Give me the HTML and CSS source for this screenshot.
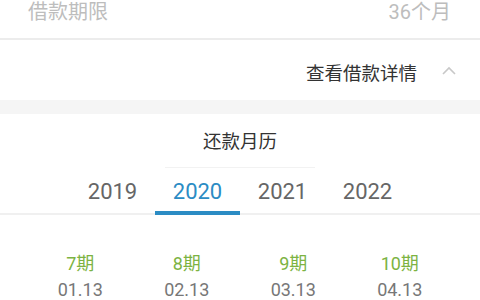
FILE: index.html
```html
<!DOCTYPE html>
<html lang="zh-CN">
<head>
    <meta charset="UTF-8">
    <meta name="viewport" content="width=device-width, initial-scale=1.0">
    <title>还款月历</title>
    <link rel="stylesheet" href="styles.css">
</head>
<body>
    <div class="info-row">
        <span>借款期限</span>
        <span>36个月</span>
    </div>
    <div class="detail-row">
        <span class="detail-text">查看借款详情</span>
        <svg class="chevron" width="16" height="10" viewBox="0 0 16 10">
            <path d="M2 8 L8 2 L14 8" fill="none" stroke="#c8c8c8" stroke-width="1.6"/>
        </svg>
    </div>
    <div class="gap"></div>
    <div class="calendar">
        <div class="calendar-title">
            <span>还款月历</span>
        </div>
        <div class="year-tabs">
            <div class="tab">2019</div>
            <div class="tab active">2020</div>
            <div class="tab">2021</div>
            <div class="tab">2022</div>
        </div>
        <div class="periods">
            <div class="period">
                <div class="period-num">7期</div>
                <div class="period-date">01.13</div>
            </div>
            <div class="period">
                <div class="period-num">8期</div>
                <div class="period-date">02.13</div>
            </div>
            <div class="period">
                <div class="period-num">9期</div>
                <div class="period-date">03.13</div>
            </div>
            <div class="period">
                <div class="period-num">10期</div>
                <div class="period-date">04.13</div>
            </div>
        </div>
    </div>
</body>
</html>
```

FILE: styles.css
```css
* {
    box-sizing: border-box;
    margin: 0;
    padding: 0;
}

body {
    width: 480px;
    height: 300px;
    overflow: hidden;
    background-color: #fff;
    font-family: Roboto, "Noto Sans CJK SC", sans-serif;
}

.info-row {
    height: 40px;
    padding: 0 29px 0 28px;
    display: flex;
    justify-content: space-between;
    align-items: flex-start;
    font-size: 20px;
    line-height: 24px;
    color: #bdbdbd;
    border-bottom: 2px solid #ececec;
}

.detail-row {
    height: 60px;
    padding: 4px 23px 0 0;
    display: flex;
    justify-content: flex-end;
    align-items: center;
    font-size: 18.5px;
    color: #333;
}

.chevron {
    margin-left: 24px;
    margin-top: -2px;
}

.gap {
    height: 14px;
    background-color: #f5f5f5;
}

.calendar-title {
    height: 54px;
    display: flex;
    justify-content: center;
}

.calendar-title span {
    width: 150px;
    padding-top: 14px;
    text-align: center;
    font-size: 18.5px;
    line-height: 28px;
    color: #333;
    border-bottom: 1px solid #f2f2f2;
}

.year-tabs {
    height: 47px;
    display: flex;
    justify-content: center;
    border-bottom: 2px solid #f0f0f0;
}

.tab {
    width: 85px;
    padding-top: 10px;
    text-align: center;
    font-size: 22px;
    line-height: 28px;
    color: #666;
}

.tab.active {
    color: #2b8cc4;
    border-bottom: 4px solid #2b8cc4;
    margin-bottom: -2px;
}

.periods {
    padding: 36px 27px 0;
    display: grid;
    grid-template-columns: repeat(4, 1fr);
}

.period {
    text-align: center;
}

.period-num {
    font-size: 18px;
    line-height: 26px;
    color: #7cb342;
}

.period-date {
    font-size: 18px;
    line-height: 26px;
    color: #777;
}
```
